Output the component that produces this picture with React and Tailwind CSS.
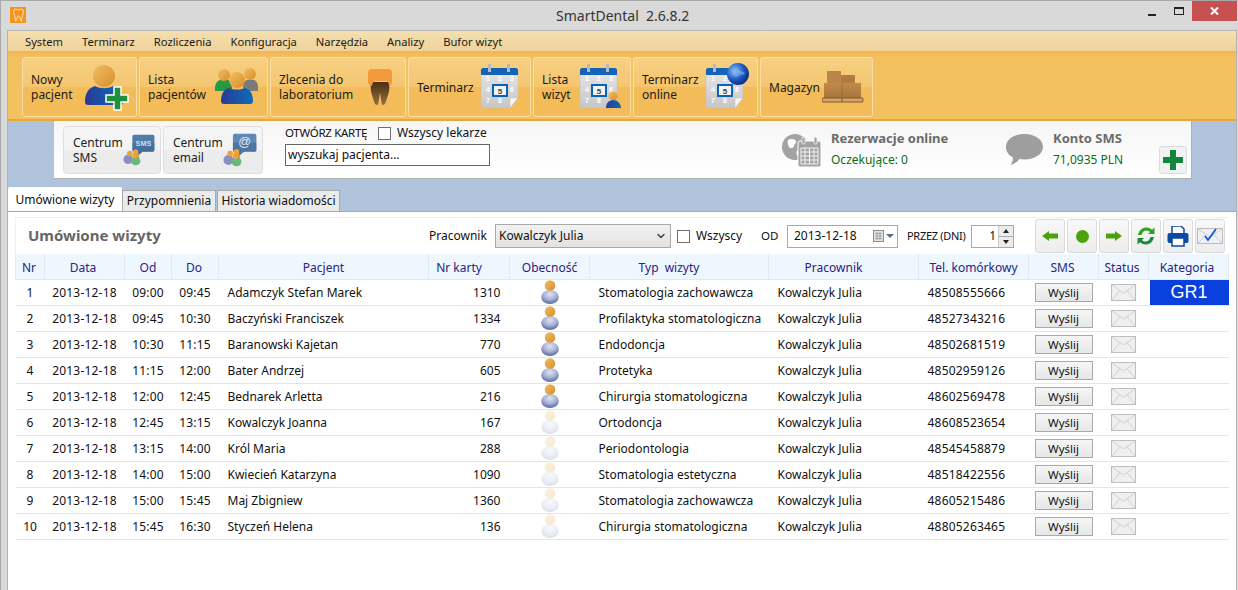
import { ChevronDown } from "lucide-react";

const COLUMNS = [
  { label: "Nr", w: "w-[29px]", extra: "pr-[2px]" },
  { label: "Data", w: "w-[80px]", extra: "pr-[3px]" },
  { label: "Od", w: "w-[47px]" },
  { label: "Do", w: "w-[47px]", extra: "pr-[2px]" },
  { label: "Pacjent", w: "w-[210px]" },
  { label: "Nr karty", w: "w-[81px]", extra: "pr-[20px]" },
  { label: "Obecność", w: "w-[80px]" },
  { label: "Typ wizyty", w: "w-[179px]", extra: "pr-[20px] [word-spacing:3px]" },
  { label: "Pracownik", w: "w-[150px]", extra: "pr-[20px]" },
  { label: "Tel. komórkowy", w: "w-[110px]" },
  { label: "SMS", w: "w-[70px]", extra: "pr-[2px]" },
  { label: "Status", w: "w-[50px]", extra: "pr-[3px]" },
  { label: "Kategoria", w: "w-[80px]", extra: "pr-[3px]" },
];

const VISITS = [
  [1, "09:00", "09:45", "Adamczyk Stefan Marek", 1310, "Stomatologia zachowawcza", "48508555666", true],
  [2, "09:45", "10:30", "Baczyński Franciszek", 1334, "Profilaktyka stomatologiczna", "48527343216", true],
  [3, "10:30", "11:15", "Baranowski Kajetan", 770, "Endodoncja", "48502681519", true],
  [4, "11:15", "12:00", "Bater Andrzej", 605, "Protetyka", "48502959126", true],
  [5, "12:00", "12:45", "Bednarek Arletta", 216, "Chirurgia stomatologiczna", "48602569478", true],
  [6, "12:45", "13:15", "Kowalczyk Joanna", 167, "Ortodoncja", "48608523654", false],
  [7, "13:15", "14:00", "Król Maria", 288, "Periodontologia", "48545458879", false],
  [8, "14:00", "15:00", "Kwiecień Katarzyna", 1090, "Stomatologia estetyczna", "48518422556", false],
  [9, "15:00", "15:45", "Maj Zbigniew", 1360, "Stomatologia zachowawcza", "48605215486", false],
  [10, "15:45", "16:30", "Styczeń Helena", 136, "Chirurgia stomatologiczna", "48805263465", false],
];

// shared gradients for all the icons
function IconDefs() {
  return (
    <svg className="absolute h-0 w-0" aria-hidden="true">
      <defs>
        <linearGradient id="head" x1="0" y1="0" x2="1" y2="1">
          <stop offset="0" stopColor="#f2bd62" />
          <stop offset="1" stopColor="#d68f2c" />
        </linearGradient>
        <linearGradient id="body" x1="0" y1="0" x2="1" y2="0">
          <stop offset="0" stopColor="#2b3a96" />
          <stop offset="1" stopColor="#0a6cb8" />
        </linearGradient>
        <radialGradient id="presence" cx="0.5" cy="0.3" r="0.7">
          <stop offset="0" stopColor="#dfe4f4" />
          <stop offset="0.55" stopColor="#a5b1d6" />
          <stop offset="1" stopColor="#56679f" />
        </radialGradient>
        <linearGradient id="cal" x1="0" y1="0" x2="0" y2="1">
          <stop offset="0" stopColor="#e6e6e6" />
          <stop offset="1" stopColor="#c6c6c6" />
        </linearGradient>
        <linearGradient id="toothroot" x1="0" y1="0" x2="0" y2="1">
          <stop offset="0" stopColor="#4b2f14" />
          <stop offset="1" stopColor="#94703f" />
        </linearGradient>
        <radialGradient id="globe" cx="0.35" cy="0.35" r="0.8">
          <stop offset="0" stopColor="#8fc0f5" />
          <stop offset="0.5" stopColor="#1f5cc4" />
          <stop offset="1" stopColor="#06195c" />
        </radialGradient>
        <linearGradient id="box" x1="0" y1="0" x2="0" y2="1">
          <stop offset="0" stopColor="#c08a4c" />
          <stop offset="1" stopColor="#a8743a" />
        </linearGradient>
      </defs>
    </svg>
  );
}

function NewPatientIcon() {
  return (
    <svg width="46" height="48" viewBox="0 0 46 48">
      <circle cx="21" cy="12" r="11" fill="url(#head)" />
      <path d="M2 38c0-8 3-14 10-16 5 3 13 3 18 0 7 2 10 8 10 16 0 2-1 3-3 3H5c-2 0-3-1-3-3z" fill="url(#body)" />
      <path d="M23 31h8v-8h7v8h7v7h-7v8h-7v-8h-8z" fill="#1f8f3c" stroke="#fff" strokeWidth="1.5" />
    </svg>
  );
}

function PatientsIcon() {
  return (
    <svg width="44" height="38" viewBox="0 0 44 38">
      <path d="M0 20c0-4 2-7 5-8h8c3 1 4 4 4 8v3H0z" fill="#249a45" />
      <path d="M28 20c0-4 1-7 4-8h7c3 1 4 4 4 8v3H28z" fill="#7b7b7b" />
      <circle cx="9" cy="7" r="6" fill="url(#head)" />
      <circle cx="35" cy="6" r="6" fill="url(#head)" />
      <path d="M6 33c0-7 3-12 8-13 5 2 11 2 16 0 5 1 8 6 8 13 0 2-1 3-3 3H9c-2 0-3-1-3-3z" fill="url(#body)" />
      <circle cx="22" cy="12" r="8" fill="url(#head)" />
    </svg>
  );
}

function ToothIcon() {
  return (
    <svg width="26" height="38" viewBox="0 0 26 38">
      <path d="M4 14h18c1 6 0 11-2 16-1 4-2 7-4 7-2 0-2-8-3-12-1 4-1 12-3 12-2 0-3-3-4-7-2-5-3-10-2-16z" fill="url(#toothroot)" />
      <path d="M1 5c0-3 2-4 5-4h14c3 0 5 1 5 4v9c0 2-1 3-3 4 0-3-1-5-3-5H9c-2 0-4 2-4 5-2-1-4-2-4-4z" fill="#f39a3c" />
    </svg>
  );
}

function CalendarIcon({ children }) {
  const numbers = [
    ["1", 8, 17], ["2", 20, 17], ["3", 32, 17],
    ["4", 8, 28], ["6", 32, 28],
    ["7", 8, 39], ["8", 20, 39],
  ];
  return (
    <svg width="46" height="46" viewBox="0 0 46 46" className="overflow-visible">
      <path d="M1 6h37v28l-8 10H3c-1 0-2-1-2-2z" fill="url(#cal)" stroke="#bdbdbd" strokeWidth="0.5" />
      <path d="M1 10V6c0-1 1-2 2-2h33c1 0 2 1 2 2v5H1z" fill="#1563b8" />
      <rect x="8" y="0" width="3" height="8" fill="#b8b8b8" />
      <rect x="27" y="0" width="3" height="8" fill="#b8b8b8" />
      <path d="M30 44l8-10h-8z" fill="#f4f4f4" stroke="#c0c0c0" strokeWidth="0.5" />
      {numbers.map(([n, x, y]) => (
        <text key={n} x={x} y={y} fontSize="7" fontWeight="700" fontFamily="Liberation Sans" fill="#fff" textAnchor="middle">
          {n}
        </text>
      ))}
      <rect x="13" y="21" width="14" height="11" fill="#f2f2f2" stroke="#0a64b4" strokeWidth="2" />
      <text x="20" y="29.5" fontSize="8" fontWeight="700" fontFamily="Liberation Sans" fill="#444" textAnchor="middle">
        5
      </text>
      {children}
    </svg>
  );
}

function BoxesIcon() {
  return (
    <svg width="42" height="32" viewBox="0 0 42 32">
      <rect x="5" y="0" width="14" height="12" fill="#b9854a" />
      <rect x="19" y="4" width="14" height="9" fill="#b07c42" />
      <rect x="2" y="12" width="37" height="15" fill="url(#box)" />
      <path d="M20 12v15" stroke="#8f6230" strokeWidth="0.6" />
      <rect x="0" y="27" width="41" height="4" rx="1" fill="#d3a566" stroke="#7b5a30" />
      <path d="M20 27v4" stroke="#7b5a30" />
    </svg>
  );
}

function SmsBubbleIcon({ at }) {
  return (
    <svg width="38" height="38" viewBox="0 0 38 38">
      <path d="M13 1h22c1 0 2 1 2 2v16c0 1-1 2-2 2H23l-7 6 1-6h-4c-1 0-2-1-2-2V3c0-1 1-2 2-2z" fill={at ? "#5f88b5" : "#4f7ca8"} />
      <path d="M11 11h26v8c0 1-1 2-2 2H23l-7 6 1-6h-4c-1 0-2-1-2-2z" fill="#3d6690" opacity="0.55" />
      {at ? (
        <text x="24" y="15" fontSize="14" fontFamily="Liberation Sans" fill="#dfe9f5" textAnchor="middle">@</text>
      ) : (
        <text x="24" y="14" fontSize="8.5" fontWeight="700" fontFamily="Liberation Sans" fill="#cfdfee" textAnchor="middle">SMS</text>
      )}
      <ellipse cx="6" cy="30" rx="5.5" ry="5.5" fill="#8a8fc0" />
      <circle cx="8" cy="23" r="3.2" fill="#e9a33a" />
      <ellipse cx="15" cy="26" rx="4" ry="4" fill="#e09a35" />
      <circle cx="15" cy="21" r="3" fill="#e9a33a" />
      <ellipse cx="15" cy="32" rx="5.5" ry="5" fill="#67b97c" />
      <circle cx="14" cy="26.5" r="2.8" fill="#e9a33a" />
    </svg>
  );
}

function WorldCalendarIcon() {
  return (
    <svg width="40" height="33" viewBox="0 0 40 33">
      <circle cx="13" cy="13" r="13" fill="#a3a3a3" />
      <path d="M6 6c3-2 7-1 8 1s-2 3-2 5-4 3-5 1-2-5-1-7zM16 16c2-1 5 0 5 2s-3 5-5 4-2-5 0-6z" fill="#fff" />
      <rect x="16" y="7" width="23" height="26" rx="2" fill="#a3a3a3" stroke="#fff" strokeWidth="1" />
      <rect x="20" y="3" width="3" height="7" rx="1" fill="#a3a3a3" stroke="#fff" strokeWidth="0.7" />
      <rect x="32" y="3" width="3" height="7" rx="1" fill="#a3a3a3" stroke="#fff" strokeWidth="0.7" />
      <path d="M19 14h17v16H19zM19 18h17M19 22h17M19 26h17M23 14v16M27.5 14v16M32 14v16" fill="none" stroke="#f4f4f4" strokeWidth="1" />
    </svg>
  );
}

function ChatIcon() {
  return (
    <svg width="37" height="31" viewBox="0 0 37 31">
      <path d="M18.5 0C29 0 37 5.5 37 12.8S29 25.5 18.5 25.5c-2 0-3.500-.2-5-.5-2 3-5 5-9 6 1.500-2 2.500-4.500 2.500-7.500C2.500 21.500 0 17.500 0 12.800 0 5.500 8 0 18.500 0z" fill="#9e9e9e" />
    </svg>
  );
}

function PresenceIcon({ here }) {
  return (
    <svg width="18" height="24" viewBox="0 0 18 24" className={here ? "" : "opacity-20"}>
      <ellipse cx="9" cy="17" rx="8.8" ry="7" fill="url(#presence)" />
      <circle cx="9" cy="5.5" r="5.3" fill="url(#head)" />
    </svg>
  );
}

function EnvelopeIcon() {
  return (
    <svg width="25" height="17" viewBox="0 0 25 17">
      <rect x="0.500" y="0.500" width="24" height="16" fill="#efefef" stroke="#bdbdbd" />
      <path d="M1 1l11.500 8L24 1M1 16l8-9.500M24 16l-8-9.500" fill="none" stroke="#d0d0d0" />
    </svg>
  );
}

function ToolButton({ children }) {
  return (
    <button className="flex h-[34px] w-[30px] items-center justify-center rounded-[3px] border border-[#dcdcdc] bg-gradient-to-b from-[#f8f8f8] to-[#ededed]">
      {children}
    </button>
  );
}

function ArrowIcon({ left }) {
  return (
    <svg width="16" height="10" viewBox="0 0 16 10" className={left ? "" : "rotate-180"}>
      <path d="M0 5l7-5v2.500h9v5H7V10z" fill="#4aa30c" />
    </svg>
  );
}

function RefreshIcon() {
  return (
    <svg width="20" height="20" viewBox="0 0 20 20">
      <path d="M2 9C3 4 6.500 1.500 10.500 1.500c2.500 0 4 1 5.500 2.200L18.500 1.500V8h-6.500l2-2c-1-1-2.200-1.500-3.500-1.500-2.500 0-4.500 1.800-5 4.500z" fill="#33a122" />
      <path d="M18 11c-1 5-4.500 7.500-8.500 7.500-2.500 0-4-1-5.500-2.200L1.500 18.500V12H8l-2 2c1 1 2.200 1.500 3.500 1.500 2.500 0 4.500-1.800 5-4.500z" fill="#1b8a3c" />
    </svg>
  );
}

function PrinterIcon() {
  return (
    <svg width="22" height="21" viewBox="0 0 22 21">
      <path d="M5 0h9l3 3v6H5z" fill="#fff" stroke="#0a4aa0" strokeWidth="1.500" />
      <rect x="0.500" y="7" width="21" height="10" rx="2" fill="#0c4aa6" />
      <rect x="5" y="12" width="12" height="8" fill="#fff" stroke="#0a4aa0" strokeWidth="1.500" />
    </svg>
  );
}

function MailCheckIcon() {
  return (
    <svg width="26" height="16" viewBox="0 0 26 16">
      <rect x="0.500" y="0.500" width="25" height="15" fill="#eef0f5" stroke="#bcbcbc" />
      <path d="M1 1l12 8 12-8M1 15l8-8M25 15l-8-8" fill="none" stroke="#cfcfcf" />
      <path d="M8 8l3 4 8-11" fill="none" stroke="#1556c9" strokeWidth="1.800" />
    </svg>
  );
}

function Checkbox({ className = "" }) {
  return <span className={`inline-block h-[13px] w-[13px] border border-[#707070] bg-white ${className}`} />;
}

function LaunchButton({ width, lines, children }) {
  return (
    <div className={`flex h-[60px] ${width} items-center justify-between rounded-[3px] border border-[#f9dfa8] bg-[linear-gradient(#f6d083_0%,#f4c670_50%,#f3bc58_50%,#f3bc58_100%)] pl-2 pr-2 text-[12px] leading-[15px] text-[#1a1a1a]`}>
      <div>
        {lines.map((l) => (
          <div key={l}>{l}</div>
        ))}
      </div>
      {children}
    </div>
  );
}

function CentreButton({ lines, width, at }) {
  return (
    <div className={`flex h-[48px] ${width} items-center justify-between rounded-[4px] border border-[#dedede] bg-[linear-gradient(#f5f5f5_0%,#f3f3f3_50%,#ececec_50%,#ececec_100%)] pl-[9px] pr-[5px] text-[12px] leading-[15px] text-[#222]`}>
      <div>
        {lines.map((l) => (
          <div key={l}>{l}</div>
        ))}
      </div>
      <SmsBubbleIcon at={at} />
    </div>
  );
}

export default function App() {
  return (
    <div className="flex h-[590px] w-[1238px] flex-col overflow-hidden border-t border-l border-[#a9a9a9] bg-[#d9d9d9] font-['Noto_Sans','Open_Sans',sans-serif] text-[12px] text-[#111]">
      <IconDefs />

      {/* title bar */}
      <div className="flex h-[29px] shrink-0 items-start">
        <div className="mt-[6px] ml-[9px] flex h-[16px] w-[16px] items-center justify-center bg-[#f7941e]">
          <svg width="11" height="14" viewBox="0 0 11 14">
            <path d="M1 2c2-2 3 0 4.500 0S8 0 10 2c1 3-1 5-1.500 11-1 1-1.500-5-3-5s-2 6-3 5C2 7 0 5 1 2z" fill="none" stroke="#ffe9c9" />
          </svg>
        </div>
        <div className="ml-[530px] mt-[7px] w-[190px] text-[14px] leading-[16px] text-[#333]">SmartDental&nbsp; 2.6.8.2</div>
        <div className="ml-[402px] mt-[13px] h-[2px] w-[8px] bg-[#222]" />
        <div className="ml-[18px] mt-[6px] h-[8px] w-[10px] border border-t-2 border-[#222]" />
        <div className="ml-[8px] flex h-[20px] w-[45px] items-center justify-center bg-[#c75050]">
          <svg width="9" height="8" viewBox="0 0 9 8">
            <path d="M1 0.500l7 7M8 0.500l-7 7" stroke="#fff" strokeWidth="2" />
          </svg>
        </div>
      </div>

      {/* app frame */}
      <div className="mr-[1px] ml-[6px] flex min-h-0 flex-1 flex-col border-t border-l border-r border-[#b5b5b5] bg-[#afc3dc]">
        <div className="flex h-[21px] shrink-0 items-center gap-[19px] border-b border-[#f0b850] bg-gradient-to-b from-[#f5e0b0] to-[#efd299] pt-[2px] pl-[17px] text-[11.2px] text-[#1a1a1a]">
          {["System", "Terminarz", "Rozliczenia", "Konfiguracja", "Narzędzia", "Analizy", "Bufor wizyt"].map((m) => (
            <span key={m}>{m}</span>
          ))}
        </div>

        <div className="flex h-[69px] shrink-0 items-start gap-[2px] border-b-2 border-[#e8a73a] bg-[linear-gradient(#f1b752_0px,#f4c161_6px)] pt-[5px] pl-[14px]">
          <LaunchButton width="w-[115px]" lines={["Nowy", "pacjent"]}>
            <span className="mt-[2px] mr-[-1px]"><NewPatientIcon /></span>
          </LaunchButton>
          <LaunchButton width="w-[129px]" lines={["Lista", "pacjentów"]}>
            <PatientsIcon />
          </LaunchButton>
          <LaunchButton width="w-[136px]" lines={["Zlecenia do", "laboratorium"]}>
            <span className="mr-[4px]"><ToothIcon /></span>
          </LaunchButton>
          <LaunchButton width="w-[123px]" lines={["Terminarz"]}>
            <span className="mr-[-4px]"><CalendarIcon /></span>
          </LaunchButton>
          <LaunchButton width="w-[98px]" lines={["Lista", "wizyt"]}>
            <span className="mr-[-3px]">
              <CalendarIcon>
                <circle cx="34" cy="32" r="4.500" fill="url(#head)" />
                <path d="M27 44c0-5 3-8 7-8s8 3 8 8z" fill="url(#body)" />
              </CalendarIcon>
            </span>
          </LaunchButton>
          <LaunchButton width="w-[125px]" lines={["Terminarz", "online"]}>
            <span className="mr-[-2px]">
              <CalendarIcon>
                <circle cx="33" cy="10" r="11" fill="url(#globe)" />
                <path d="M26 6c3-2 6-2 8 0s5 1 6 4c-3 1-5 0-7 2s-5 0-7-6z" fill="#7fb4ee" opacity="0.6" />
              </CalendarIcon>
            </span>
          </LaunchButton>
          <LaunchButton width="w-[113px]" lines={["Magazyn"]}>
            <BoxesIcon />
          </LaunchButton>
        </div>

        {/* search and account strip */}
        <div className="ml-[46px] flex h-[58px] w-[1138px] shrink-0 items-center border-r border-b border-[#b0b0b0] bg-gradient-to-b from-[#f6f6f6] to-white pl-[9px]">
          <div className="flex gap-[2px]">
            <CentreButton width="w-[98px]" lines={["Centrum", "SMS"]} />
            <CentreButton width="w-[100px]" lines={["Centrum", "email"]} at />
          </div>
          <div className="mb-[9px] ml-[22px] flex w-[205px] flex-col">
            <div className="flex h-[18px] items-center text-[11.5px]">
              <span className="w-[93px] tracking-[-0.3px]">OTWÓRZ KARTĘ</span>
              <Checkbox />
              <span className="ml-[6px] text-[12px]">Wszyscy lekarze</span>
            </div>
            <div className="mt-[2px] flex h-[22px] items-center border border-[#666] bg-white pl-[2px] text-[12px]">wyszukaj pacjenta...</div>
          </div>

          <div className="ml-[292px] mt-[1px]"><WorldCalendarIcon /></div>
          <div className="mb-[1px] ml-[9px] w-[175px]">
            <div className="text-[13px] font-bold leading-[16px] text-[#6b6b6b]">Rezerwacje online</div>
            <div className="mt-[6px] text-[12px] leading-[16px] text-[#0f6d0f]">Oczekujące: 0</div>
          </div>
          <ChatIcon />
          <div className="mb-[1px] ml-[10px] w-[106px]">
            <div className="text-[13px] font-bold leading-[16px] text-[#6b6b6b]">Konto SMS</div>
            <div className="mt-[6px] text-[12px] leading-[16px] text-[#0f6d0f]">71,0935 PLN</div>
          </div>
          <div className="mt-[20px] flex h-[28px] w-[28px] items-center justify-center rounded-[3px] border border-[#dcdcdc] bg-[#f2f2f2]">
            <svg width="20" height="20" viewBox="0 0 20 20">
              <path d="M7 0h6v7h7v6h-7v7H7v-7H0V7h7z" fill="#12863a" />
            </svg>
          </div>
        </div>

        {/* tabs */}
        <div className="mt-[9px] flex h-[23px] shrink-0 items-end">
          <div className="z-10 flex h-[24px] w-[114px] items-center justify-center rounded-t-[2px] bg-white pt-[1px] text-[12px]">Umówione wizyty</div>
          <div className="flex h-[21px] w-[94px] items-center justify-center border border-b-0 border-[#a9a9a9] bg-[#ebebeb]">Przypomnienia</div>
          <div className="ml-px flex h-[21px] w-[123px] items-center justify-center border border-b-0 border-[#a9a9a9] bg-[#ebebeb]">Historia wiadomości</div>
        </div>

        {/* main panel */}
        <div className="min-h-0 flex-1 border-t border-[#a9a9a9] bg-white pt-[5px] pl-[7px] pr-[7px]">
          <div className="flex h-[37px] items-start border-t border-l border-[#f0f0f0]">
            <div className="mt-[7px] ml-[12px] w-[401px] text-[15px] font-bold leading-[20px] text-[#666]">Umówione wizyty</div>
            <div className="mt-[6px] flex h-[24px] items-center">
              <span className="w-[66px]">Pracownik</span>
              <div className="flex h-[24px] w-[176px] items-center justify-between border border-[#a9a9a9] bg-gradient-to-b from-[#f2f2f2] to-[#e2e2e2] pr-[3px] pl-[3px]">
                <span>Kowalczyk Julia</span>
                <ChevronDown size={12} strokeWidth={3} className="text-[#444]" />
              </div>
              <Checkbox className="ml-[6px]" />
              <span className="ml-[6px] w-[65px]">Wszyscy</span>
              <span className="w-[26px] text-[11.5px]">OD</span>
              <div className="flex h-[23px] w-[111px] items-center justify-between border border-[#a9a9a9] bg-white pr-[3px] pl-[6px]">
                <span>2013-12-18</span>
                <span className="flex items-center gap-[2px]">
                  <svg width="11" height="12" viewBox="0 0 11 12">
                    <rect x="0.500" y="0.500" width="10" height="11" fill="#e4e4e4" stroke="#8d8d8d" />
                    <path d="M2 3.500h7M2 6h7M2 8.500h7M4 2v8M7 2v8" stroke="#a5a5a5" />
                  </svg>
                  <span className="h-0 w-0 border-x-[4px] border-t-[4px] border-x-transparent border-t-[#5a6e90]" />
                </span>
              </div>
              <span className="ml-[9px] w-[64px] text-[11px] tracking-[-0.3px]">PRZEZ (DNI)</span>
              <div className="flex h-[23px] w-[43px] items-center justify-between border border-[#a9a9a9] bg-white">
                <span className="flex-1 pr-[2px] text-right">1</span>
                <span className="flex h-full w-[15px] flex-col border-l border-[#ccc] bg-[#ececec]">
                  <span className="flex flex-1 items-center justify-center border-b border-[#aaa]">
                    <span className="h-0 w-0 border-x-[3px] border-b-[4px] border-x-transparent border-b-[#222]" />
                  </span>
                  <span className="flex flex-1 items-center justify-center">
                    <span className="h-0 w-0 border-x-[3px] border-t-[4px] border-x-transparent border-t-[#222]" />
                  </span>
                </span>
              </div>
            </div>
            <div className="mt-[1px] ml-[21px] flex gap-[2px]">
              <ToolButton><ArrowIcon left /></ToolButton>
              <ToolButton><span className="h-[13px] w-[13px] rounded-full bg-[#4aa30c]" /></ToolButton>
              <ToolButton><ArrowIcon /></ToolButton>
              <ToolButton><RefreshIcon /></ToolButton>
              <ToolButton><PrinterIcon /></ToolButton>
              <ToolButton><MailCheckIcon /></ToolButton>
            </div>
          </div>

          <table className="w-[1213px] table-fixed border-collapse">
            <thead>
              <tr className="h-[25px] bg-[#eef6fe]">
                {COLUMNS.map((c) => (
                  <th key={c.label} className={`${c.w} ${c.extra || ""} border-x border-b border-[#e0e8f6] pt-[3px] text-center text-[12px] font-normal text-[#2b2480]`}>
                    {c.label}
                  </th>
                ))}
              </tr>
            </thead>
            <tbody>
              {VISITS.map(([nr, from, to, name, card, type, phone, here]) => (
                <tr key={nr} className="h-[26px] border-b border-[#e4e4f0]">
                  <td className="p-0 pt-[2px] text-center">{nr}</td>
                  <td className="p-0 pt-[2px] text-center tracking-[0.2px]">2013-12-18</td>
                  <td className="p-0 pt-[2px] text-center tracking-[0.2px]">{from}</td>
                  <td className="p-0 pt-[2px] text-center tracking-[0.2px]">{to}</td>
                  <td className="p-0 pt-[2px] pl-[9px]">{name}</td>
                  <td className="p-0 pt-[2px] pr-[9px] text-right">{card}</td>
                  <td className="p-0"><div className="flex justify-center"><PresenceIcon here={here} /></div></td>
                  <td className="p-0 pt-[2px] pl-[9px] whitespace-nowrap">{type}</td>
                  <td className="p-0 pt-[2px] pl-[9px]">Kowalczyk Julia</td>
                  <td className="p-0 pt-[2px] pl-[9px] tracking-[0.2px]">{phone}</td>
                  <td className="p-0 pt-[1px]">
                    <div className="flex justify-center">
                      <button className="flex h-[19px] w-[58px] items-center justify-center border border-[#a9a9a9] bg-gradient-to-b from-[#f6f6f6] to-[#e6e6e6] text-[11.5px]">Wyślij</button>
                    </div>
                  </td>
                  <td className="p-0"><div className="flex justify-center"><EnvelopeIcon /></div></td>
                  <td className="p-0">
                    {nr === 1 && (
                      <div className="ml-px flex h-[25px] items-center justify-center bg-[#0a40dd] font-['Liberation_Sans',sans-serif] text-[18px] text-white">GR1</div>
                    )}
                  </td>
                </tr>
              ))}
            </tbody>
          </table>
        </div>
      </div>
    </div>
  );
}
